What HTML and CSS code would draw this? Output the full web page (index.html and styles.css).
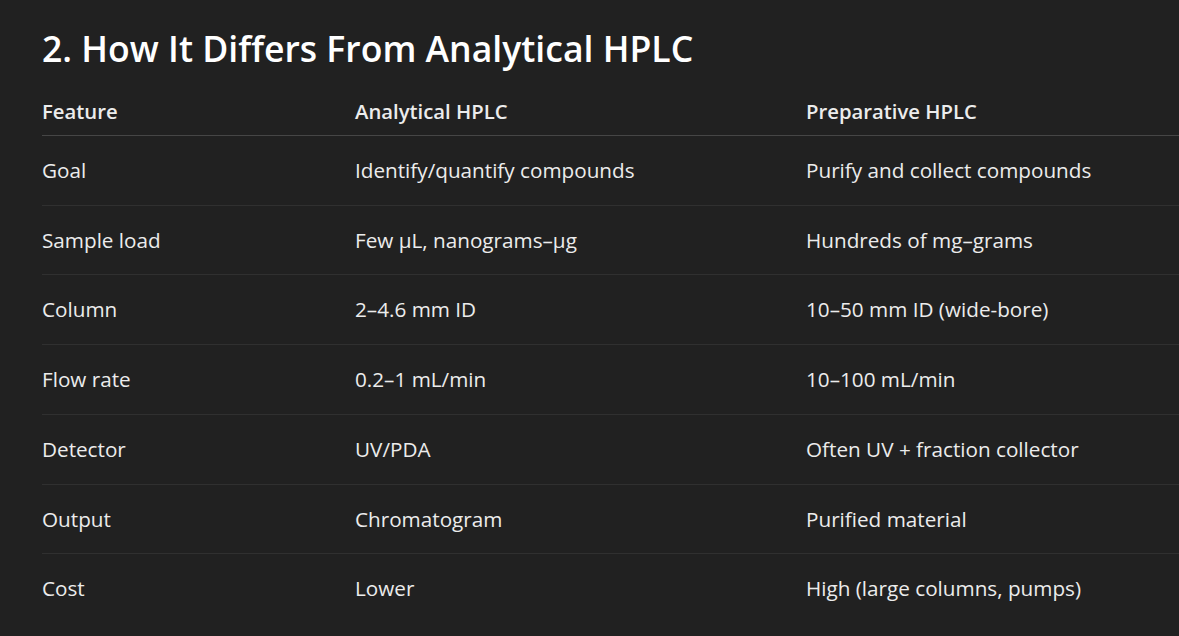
FILE: index.html
```html
<!DOCTYPE html>
<html lang="en">
<head>
<meta charset="utf-8">
<title>How It Differs From Analytical HPLC</title>
<link rel="stylesheet" href="styles.css">
</head>
<body>
<main class="content">
  <h2 class="title">2. How It Differs From Analytical HPLC</h2>
  <div class="table-wrap">
    <table class="compare">
      <thead>
        <tr>
          <th class="c1">Feature</th>
          <th class="c2">Analytical HPLC</th>
          <th class="c3">Preparative HPLC</th>
        </tr>
      </thead>
      <tbody>
        <tr><td>Goal</td><td>Identify/quantify compounds</td><td>Purify and collect compounds</td></tr>
        <tr><td>Sample load</td><td>Few µL, nanograms–µg</td><td>Hundreds of mg–grams</td></tr>
        <tr><td>Column</td><td>2–4.6 mm ID</td><td>10–50 mm ID (wide-bore)</td></tr>
        <tr><td>Flow rate</td><td>0.2–1 mL/min</td><td>10–100 mL/min</td></tr>
        <tr><td>Detector</td><td>UV/PDA</td><td>Often UV + fraction collector</td></tr>
        <tr><td>Output</td><td>Chromatogram</td><td>Purified material</td></tr>
        <tr><td>Cost</td><td>Lower</td><td>High (large columns, pumps)</td></tr>
      </tbody>
    </table>
  </div>
</main>
</body>
</html>
```

FILE: styles.css
```css
html, body {
  margin: 0;
  padding: 0;
  background: #212121;
  overflow: hidden;
}

body {
  font-family: "Open Sans", "Noto Sans", "Liberation Sans", sans-serif;
  color: #ececec;
}

.content {
  padding: 22px 0 0 42px;
}

.title {
  margin: 0;
  font-size: 35.6px;
  line-height: 52px;
  font-weight: 600;
  color: #ffffff;
}

.table-wrap {
  margin-top: 13px;
}

.compare {
  border-collapse: collapse;
  width: 100%;
  table-layout: fixed;
  font-size: 20.7px;
}

.compare th,
.compare td {
  text-align: left;
  padding: 0;
  vertical-align: middle;
}

.compare th {
  font-size: 20.3px;
  font-weight: 600;
  line-height: 28px;
  padding: 10px 0;
  border-bottom: 1px solid #464646;
}

.compare td {
  line-height: 28.7px;
  padding: 20px 0;
  border-bottom: 1px solid #303030;
}

.compare tbody tr:last-child td {
  border-bottom: none;
}

.c1 { width: 313px; }
.c2 { width: 451px; }
```
